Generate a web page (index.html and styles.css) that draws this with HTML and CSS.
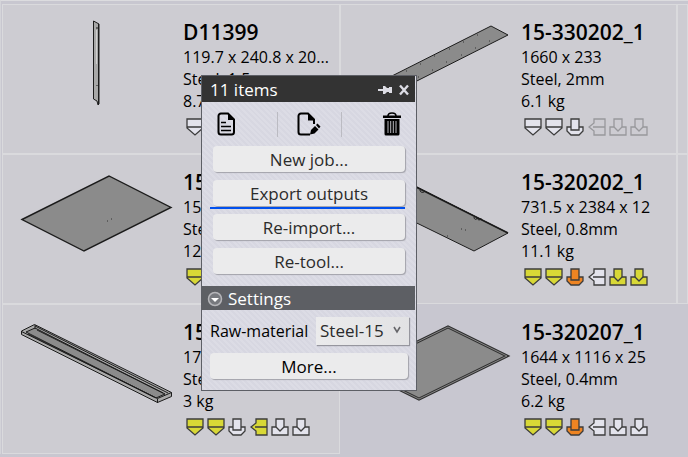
FILE: index.html
```html
<!DOCTYPE html>
<html lang="en">
<head>
<meta charset="utf-8">
<title>Parts</title>
<link rel="stylesheet" href="styles.css">
</head>
<body>
<svg class="defs" aria-hidden="true">
  <symbol id="vee" viewBox="0 0 18 18"><path d="M1 1h16v9l-8 7-8-7zM1 9h16"/></symbol>
  <symbol id="punch" viewBox="0 0 18 18"><path d="M5 9H1v4l4 4h8l4-4V9h-4z"/><path d="M5 1h8v11H5z"/></symbol>
  <symbol id="side" viewBox="0 0 18 18"><path d="M17 1H6v4L1 9l5 4v4h11zM5 9h12"/></symbol>
  <symbol id="die" viewBox="0 0 18 18"><path d="M5 1h8v8h4v8H1V9h4z"/><path d="M5 9l4 4 4-4"/></symbol>
</svg>

<main class="parts">
  <article class="card">
    <svg class="thumb" viewBox="3 5 180 140">
      <path class="face light" d="M93.500 21l5.500 3v80l-1 1-1-4-3.500-2z"/>
      <path class="edge" d="M98.500 24v80"/>
      <path class="shine" d="M96.500 30v34"/>
      <path class="edge" d="M93.500 60v2M97 85v1M97 27v2"/>
    </svg>
    <div class="info">
      <h2>D11399</h2><p>119.7 x 240.8 x 20...</p><p>Steel, 1.5mm</p><p>8.7 kg</p>
      <div class="tools"><svg><use href="#vee"/></svg></div>
    </div>
  </article>
  <article class="card">
    <svg class="thumb" viewBox="341 5 180 140">
      <path class="face" d="M380 82l111-56 17 9-111 56z"/>
      <path class="dots" d="M477 35h1M463 42h1M449 49h1M434 56h1M420 64h1M406 71h1M489 41h1M475 48h1M461 55h1M446 62h1M432 70h1M418 77h1"/>
    </svg>
    <div class="info">
      <h2>15-330202_1</h2><p>1660 x 233</p><p>Steel, 2mm</p><p>6.1 kg</p>
      <div class="tools"><svg><use href="#vee"/></svg><svg><use href="#vee"/></svg><svg><use href="#punch"/></svg><svg class="off"><use href="#side"/></svg><svg class="off"><use href="#die"/></svg><svg class="off"><use href="#die"/></svg></div>
    </div>
  </article>
  <div class="card"></div>

  <article class="card">
    <svg class="thumb" viewBox="3 155 180 140">
      <path class="face bold" d="M22 219.500L109 176l62 31.500L84 251z"/>
      <path class="dots" d="M107 221h1M111 219h1"/>
    </svg>
    <div class="info">
      <h2>15</h2><p>15</p><p>Steel</p><p>12</p>
      <div class="tools"><svg class="yellow"><use href="#vee"/></svg></div>
    </div>
  </article>
  <article class="card">
    <svg class="thumb" viewBox="341 155 180 140">
      <path class="face" d="M382 206l35-19 91 46-34 18z"/>
      <path class="edge thick" d="M410 184l98 49"/>
      <path class="edge" d="M420 190c0 3 4 3 5 1M474 217c0 3 3 3 3 1 1 3 4 2 4 0"/>
      <path class="dots" d="M461 229h1M465 230h1M447 236h1"/>
    </svg>
    <div class="info">
      <h2>15-320202_1</h2><p>731.5 x 2384 x 12</p><p>Steel, 0.8mm</p><p>11.1 kg</p>
      <div class="tools"><svg class="yellow"><use href="#vee"/></svg><svg class="yellow"><use href="#vee"/></svg><svg class="orange"><use href="#punch"/></svg><svg><use href="#side"/></svg><svg class="yellow"><use href="#die"/></svg><svg class="yellow"><use href="#die"/></svg></div>
    </div>
  </article>
  <div class="card"></div>

  <article class="card">
    <svg class="thumb" viewBox="3 305 180 140">
      <path class="face light" d="M21.500 331l13-6.500 137 68v4l-14 6-136-68z"/>
      <path class="face" d="M26 332l9-4 130 66-9 4z"/>
      <path class="edge" d="M21.500 331.500l136 67 14-6M157.500 399v4M35 326l133 67M37 330l126 63M28 334l126 63M35 325v4"/>
    </svg>
    <div class="info">
      <h2>15</h2><p>17</p><p>Steel</p><p>3 kg</p>
      <div class="tools"><svg class="yellow"><use href="#vee"/></svg><svg class="yellow"><use href="#vee"/></svg><svg><use href="#punch"/></svg><svg class="yellow"><use href="#side"/></svg><svg><use href="#die"/></svg><svg><use href="#die"/></svg></div>
    </div>
  </article>
  <article class="card bare">
    <svg class="thumb" viewBox="341 305 180 140">
      <path class="face double" d="M360 370l88-43 59 29-88 43z"/>
      <path class="rim" d="M360 370l88-43 59 29-88 43z"/>
    </svg>
    <div class="info">
      <h2>15-320207_1</h2><p>1644 x 1116 x 25</p><p>Steel, 0.4mm</p><p>6.2 kg</p>
      <div class="tools"><svg class="yellow"><use href="#vee"/></svg><svg class="yellow"><use href="#vee"/></svg><svg class="orange"><use href="#punch"/></svg><svg><use href="#side"/></svg><svg><use href="#die"/></svg><svg><use href="#die"/></svg></div>
    </div>
  </article>
</main>

<section class="popup" aria-label="11 items">
  <header class="bar">
    <h1>11 items</h1>
    <button class="icon" aria-label="Pin"><svg width="15" height="12" viewBox="0 0 15 12"><path class="pale" d="M0 5h5V2h2l2 2h2V3h3v6h-3V8H9l-2 2H5V7H0z"/></svg></button>
    <button class="icon" aria-label="Close"><svg width="12" height="12" viewBox="0 0 12 12"><path class="cross" d="M2 1.500l8 9M10 1.500l-8 9"/></svg></button>
  </header>
  <div class="actions">
    <button class="icon" aria-label="Report"><svg width="18" height="24" viewBox="0 0 18 24"><path class="ink" d="M4 1.500h7l6 6V20a2.500 2.500 0 0 1-2.500 2.500H4A2.500 2.500 0 0 1 1.500 20V4A2.500 2.500 0 0 1 4 1.500z"/><path d="M11 1l6 7h-6z"/><path class="ink thin" d="M4 10.500h5M4 14.500h10M4 18.500h10"/></svg></button>
    <button class="icon" aria-label="Edit"><svg width="24" height="24" viewBox="0 0 24 24"><path class="ink" d="M13 22.500H4A2.500 2.500 0 0 1 1.500 20V4A2.500 2.500 0 0 1 4 1.500h7l6 6V12"/><path d="M11 1l7 7.500h-7zM13 22.500l1-4.500 4-4 3.500 3.500-4 4zM19 13l1.500-1.500 3 3L22 16.500z"/></svg></button>
    <button class="icon" aria-label="Delete"><svg width="20" height="24" viewBox="0 0 20 24"><path d="M1 3.500h18V6H1zM2.500 7h15v15a1.500 1.500 0 0 1-1.500 1.500H4A1.500 1.500 0 0 1 2.500 22z"/><path class="ink thin" d="M6 4c0-2 1-3 4-3s4 1 4 3"/><path class="slats" d="M6 9v12M8.700 9v12M11.300 9v12M14 9v12"/></svg></button>
  </div>
  <div class="stack">
    <button class="push">New job...</button>
    <button class="push marked">Export outputs</button>
    <button class="push">Re-import...</button>
    <button class="push">Re-tool...</button>
  </div>
  <button class="section"><svg width="16" height="16" viewBox="0 0 16 16"><circle cx="8" cy="8" r="6.500"/><path d="M4 7h8l-4 4z"/></svg>Settings</button>
  <div class="settings">
    <div class="field">
      <label for="material">Raw-material</label>
      <div class="pick"><select id="material"><option>Steel-15</option></select><svg width="8" height="8" viewBox="0 0 8 8"><path d="M1 1l3 5 3-5"/></svg></div>
    </div>
    <button class="push">More...</button>
  </div>
</section>
</body>
</html>
```
FILE: styles.css
```css
* { box-sizing: border-box; }
body {
  margin: 0;
  min-height: 100vh;
  overflow: hidden;
  background: #c8c7d0;
  color: #000;
  font: 16px/22px "Open Sans", "Noto Sans", sans-serif;
}
h1, h2, p { margin: 0; }
.defs { display: none; }

.parts {
  display: grid;
  grid-template-columns: 338fr 337fr 11fr;
  grid-auto-rows: 150px;
  padding: 3px 0 0 1px;
  border-top: 1px solid #dcdcdf;
  border-left: 1px solid #d4d4d9;
}
.card {
  display: flex;
  min-width: 0;
  border: 1px solid #dadadd;
  background: #cdccd2;
  overflow: hidden;
}
.card.bare { border-color: transparent; background: none; }
.thumb { flex: none; width: 180px; height: 140px; }
.info { padding-top: 13px; white-space: nowrap; }
.info h2 { font-size: 21px; font-weight: 600; line-height: 28px; }

.face { fill: #8b8b8b; stroke: #1c1c1c; stroke-width: 1; }
.face.light { fill: #a8a8a8; }
.face.bold { stroke-width: 1.4; }
.face.double { stroke: #303030; stroke-width: 3; }
.rim { fill: none; stroke: #868686; stroke-width: 1; }
.edge { fill: none; stroke: #1c1c1c; stroke-width: 1; }
.edge.thick { stroke-width: 1.6; }
.shine { stroke: #d0d0d0; }
.dots { stroke: #333; }

.tools { display: flex; justify-content: space-between; width: 124px; margin: 6px 0 0 3px; }
.tools svg { width: 18px; height: 18px; fill: #e3e3ec; stroke: #3c3c3c; stroke-width: 1.3; }
.tools .yellow { fill: #d8d836; }
.tools .orange { fill: #ee8422; }
.tools .off { fill: none; stroke: #98989c; }

button, select { font: inherit; color: inherit; border: 0; padding: 0; margin: 0; }
.icon { display: flex; background: none; }

.popup {
  position: absolute;
  left: 201px;
  top: 75px;
  width: 216px;
  border: 1px solid #5d5f66;
  background: repeating-linear-gradient(45deg, #d7d7e1 0 2px, #dcdce5 2px 4px);
  font-size: 17px;
}
.bar {
  display: flex;
  align-items: center;
  gap: 5px;
  height: 26px;
  margin-right: 1px;
  padding: 2px 5px 0 8px;
  background: #333;
  color: #fff;
}
.bar h1 { flex: 1; font-size: 17px; font-weight: inherit; }
.pale { fill: #dcdce4; }
.cross { fill: none; stroke: #dcdce4; stroke-width: 2.4; }

.actions { display: grid; grid-template-columns: 1fr 65px 1fr; padding: 10px 0 9px; }
.actions .icon { height: 25px; padding-left: 15px; }
.actions .icon:nth-child(2) { justify-content: center; padding: 0; border: solid #bbbbc2; border-width: 0 1px; }
.actions .icon:last-child { justify-content: flex-end; padding: 0 14px 0 0; }
.ink { fill: none; stroke: #000; stroke-width: 2; }
.ink.thin { stroke-width: 1.6; }
.slats { stroke: #b8b8be; stroke-width: 1; }

.stack { display: grid; gap: 8px; padding: 0 11px; }
.push {
  position: relative;
  height: 26px;
  padding-top: 1px;
  border-radius: 4px;
  background: #ebebec;
  box-shadow: 1px 1px 1px #a2a2aa;
  color: #2b2b2b;
  line-height: 25px;
}
.marked::after {
  content: "";
  position: absolute;
  left: -3px;
  right: 0;
  bottom: -3px;
  height: 2px;
  background: #0050ee;
}
.section {
  display: flex;
  align-items: center;
  gap: 5px;
  width: calc(100% - 1px);
  height: 24px;
  margin-top: 12px;
  padding: 1px 0 0 5px;
  background: #5d5f64;
  color: #fff;
}
.section circle { fill: #77797e; stroke: #b5b5b9; stroke-width: 1.5; }
.section path { fill: #fff; }

.settings { display: grid; gap: 8px; padding: 7px 8px 11px; }
.settings .push { color: #000; }
.field { display: flex; align-items: center; justify-content: space-between; margin-right: -1px; font-size: 16px; }
.pick { position: relative; width: 93px; box-shadow: 1px 1px 1px #96969e; }
.pick select {
  display: block;
  width: 100%;
  height: 28px;
  padding-left: 4px;
  appearance: none;
  border-radius: 0;
  background: linear-gradient(90deg, #ebebec, #e2e2e4);
  color: #2b2b2b;
  font-size: 17px;
}
.pick svg { position: absolute; right: 8px; top: 9px; fill: none; stroke: #66666a; stroke-width: 1.6; pointer-events: none; }
```
